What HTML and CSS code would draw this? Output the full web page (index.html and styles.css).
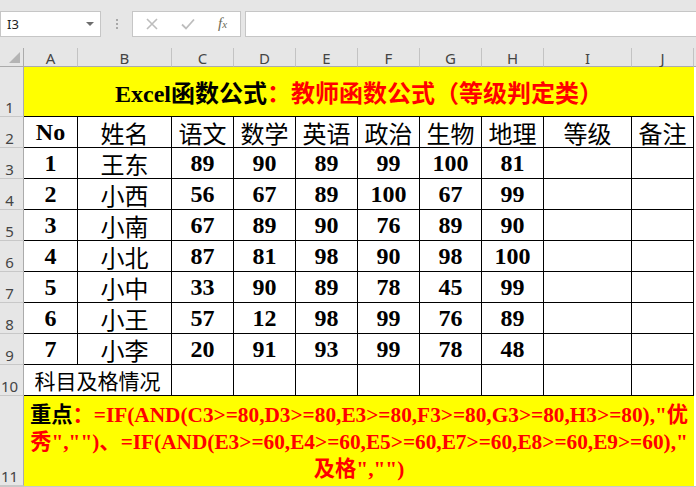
FILE: index.html
```html
<!DOCTYPE html>
<html lang="zh-CN">
<head>
<meta charset="utf-8">
<title>Excel函数公式</title>
<link rel="stylesheet" href="styles.css">
</head>
<body>
<div class="app">
  <div class="toolbar">
    <div class="namebox"><span>I3</span><span class="caret"></span></div>
    <div class="grip"><i></i><i></i><i></i></div>
    <div class="fbtns">
      <svg class="ico-x" width="12" height="12" viewBox="0 0 12 12"><path d="M1 1L11 11M11 1L1 11" stroke="#bdbdbd" stroke-width="1.6" fill="none"/></svg>
      <svg class="ico-ok" width="14" height="12" viewBox="0 0 14 12"><path d="M1 6.5L5 10.5L13 1.5" stroke="#bdbdbd" stroke-width="1.8" fill="none"/></svg>
      <span class="fx">f<span class="fxs">x</span></span>
    </div>
    <div class="finput"></div>
  </div>
  <div class="sheet">
    <div class="corner"><svg width="24" height="19" viewBox="0 0 24 19"><path d="M9 15L20 4L20 15Z" fill="#b4b4b4"/></svg></div>
    <div class="ch">A</div><div class="ch">B</div><div class="ch">C</div><div class="ch">D</div><div class="ch">E</div><div class="ch">F</div><div class="ch">G</div><div class="ch">H</div><div class="ch">I</div><div class="ch">J</div><div class="g hd"></div>

    <div class="rh">1</div>
    <div class="title"><span class="blk">Excel函数公式</span><span class="red">：教师函数公式（等级判定类）</span></div>
    <div class="g"></div>

    <div class="rh">2</div>
    <div class="c">No</div><div class="c cn">姓名</div><div class="c cn">语文</div><div class="c cn">数学</div><div class="c cn">英语</div><div class="c cn">政治</div><div class="c cn">生物</div><div class="c cn">地理</div><div class="c cn">等级</div><div class="c cn">备注</div><div class="g"></div>

    <div class="rh">3</div>
    <div class="c">1</div><div class="c cn">王东</div><div class="c">89</div><div class="c">90</div><div class="c">89</div><div class="c">99</div><div class="c">100</div><div class="c">81</div><div class="c"></div><div class="c"></div><div class="g"></div>

    <div class="rh">4</div>
    <div class="c">2</div><div class="c cn">小西</div><div class="c">56</div><div class="c">67</div><div class="c">89</div><div class="c">100</div><div class="c">67</div><div class="c">99</div><div class="c"></div><div class="c"></div><div class="g"></div>

    <div class="rh">5</div>
    <div class="c">3</div><div class="c cn">小南</div><div class="c">67</div><div class="c">89</div><div class="c">90</div><div class="c">76</div><div class="c">89</div><div class="c">90</div><div class="c"></div><div class="c"></div><div class="g"></div>

    <div class="rh">6</div>
    <div class="c">4</div><div class="c cn">小北</div><div class="c">87</div><div class="c">81</div><div class="c">98</div><div class="c">90</div><div class="c">98</div><div class="c">100</div><div class="c"></div><div class="c"></div><div class="g"></div>

    <div class="rh">7</div>
    <div class="c">5</div><div class="c cn">小中</div><div class="c">33</div><div class="c">90</div><div class="c">89</div><div class="c">78</div><div class="c">45</div><div class="c">99</div><div class="c"></div><div class="c"></div><div class="g"></div>

    <div class="rh">8</div>
    <div class="c">6</div><div class="c cn">小王</div><div class="c">57</div><div class="c">12</div><div class="c">98</div><div class="c">99</div><div class="c">76</div><div class="c">89</div><div class="c"></div><div class="c"></div><div class="g"></div>

    <div class="rh">9</div>
    <div class="c">7</div><div class="c cn">小李</div><div class="c">20</div><div class="c">91</div><div class="c">93</div><div class="c">99</div><div class="c">78</div><div class="c">48</div><div class="c"></div><div class="c"></div><div class="g"></div>

    <div class="rh">10</div>
    <div class="c sub">科目及格情况</div><div class="c"></div><div class="c"></div><div class="c"></div><div class="c"></div><div class="c"></div><div class="c"></div><div class="c"></div><div class="c"></div><div class="g"></div>

    <div class="rh">11</div>
    <div class="note"><p><span class="blk">重点</span>：=IF(AND(C3&gt;=80,D3&gt;=80,E3&gt;=80,F3&gt;=80,G3&gt;=80,H3&gt;=80),"优<br>秀","")、=IF(AND(E3&gt;=60,E4&gt;=60,E5&gt;=60,E7&gt;=60,E8&gt;=60,E9&gt;=60),"<br>及格","")</p></div>
    <div class="g"></div>

    <div class="bottom"></div>
  </div>
</div>
</body>
</html>
```
FILE: styles.css
```css
html, body {
  margin: 0;
  padding: 0;
  background: #fff;
}
body {
  font-family: "Liberation Serif", "Noto Sans CJK SC", serif;
}
.app {
  width: 696px;
  height: 487px;
  overflow: hidden;
}
.toolbar {
  height: 48px;
  box-sizing: border-box;
  padding-top: 11px;
  background: #e6e6e6;
  display: flex;
  align-items: flex-start;
}
.namebox {
  width: 101px;
  height: 26px;
  box-sizing: border-box;
  background: #fff;
  border: 1px solid #c6c6c6;
  display: flex;
  align-items: center;
  justify-content: space-between;
  padding: 0 6px 0 6px;
  font-family: "Noto Sans", sans-serif;
  font-size: 13px;
  color: #222;
}
.caret {
  width: 0;
  height: 0;
  border-left: 4px solid transparent;
  border-right: 4px solid transparent;
  border-top: 4px solid #6d6d6d;
}
.grip {
  width: 31px;
  height: 26px;
  display: flex;
  flex-direction: column;
  align-items: center;
  justify-content: center;
  gap: 2px;
}
.grip i {
  display: block;
  width: 2px;
  height: 2px;
  background: #a8a8a8;
}
.fbtns {
  width: 109px;
  height: 26px;
  box-sizing: border-box;
  background: #fff;
  border: 1px solid #c6c6c6;
  display: flex;
  align-items: center;
  padding-left: 13px;
}
.ico-ok {
  margin-left: 23px;
}
.fx {
  margin-left: 23px;
  font-family: "Liberation Serif", serif;
  font-style: italic;
  font-size: 15px;
  color: #6b6b58;
  line-height: 15px;
}
.fxs {
  font-size: 11px;
}
.finput {
  flex: 1;
  margin-left: 4px;
  height: 26px;
  box-sizing: border-box;
  background: #fff;
  border: 1px solid #c6c6c6;
  border-right: none;
}
.sheet {
  display: grid;
  grid-template-columns: 24px 54px 94px repeat(6, 62px) 88px 62px 2px;
  grid-template-rows: 19px 50px repeat(9, 31px) 90px 1px;
}
.sheet > div {
  box-sizing: border-box;
  min-width: 0;
}
.corner {
  background: #e6e6e6;
  border-right: 1px solid #ababab;
  border-bottom: 1px solid #ababab;
}
.corner svg {
  display: block;
}
.ch {
  background: #e6e6e6;
  border-right: 1px solid #c3c3c3;
  border-bottom: 1px solid #ababab;
  display: flex;
  justify-content: center;
  align-items: flex-end;
  font-family: "Noto Sans", sans-serif;
  font-size: 15px;
  line-height: 15px;
  color: #444;
}
.rh {
  background: #e6e6e6;
  border-right: 1px solid #ababab;
  border-bottom: 1px solid #c8c8c8;
  display: flex;
  justify-content: center;
  align-items: flex-end;
  padding-right: 4px;
  padding-bottom: 1px;
  font-family: "Noto Sans", sans-serif;
  font-size: 15px;
  line-height: 15px;
  color: #444;
}
.g {
  background: #fff;
}
.g.hd {
  background: #e6e6e6;
  border-bottom: 1px solid #ababab;
}
.title {
  grid-column: span 10;
  background: #ffff00;
  border-bottom: 1px solid #000;
  display: flex;
  align-items: center;
  justify-content: center;
  font-size: 24px;
  font-weight: 700;
  white-space: nowrap;
}
.blk {
  color: #000;
}
.red {
  color: #ff0000;
}
.c {
  border-right: 1px solid #000;
  border-bottom: 1px solid #000;
  display: flex;
  align-items: center;
  justify-content: center;
  font-size: 24px;
  font-weight: 700;
  color: #000;
  white-space: nowrap;
}
.c.cn {
  font-weight: 400;
}
.c.sub {
  grid-column: span 2;
  font-size: 21px;
  font-weight: 400;
}
.note {
  grid-column: span 10;
  background: #ffff00;
  display: flex;
  align-items: center;
  justify-content: center;
  color: #ff0000;
  font-size: 21.3px;
  font-weight: 700;
  line-height: 27px;
  text-align: center;
  white-space: nowrap;
}
.note p {
  margin: 0;
  padding-top: 2px;
}
.bottom {
  grid-column: 1 / -1;
  background: #c8c8c8;
}
```
